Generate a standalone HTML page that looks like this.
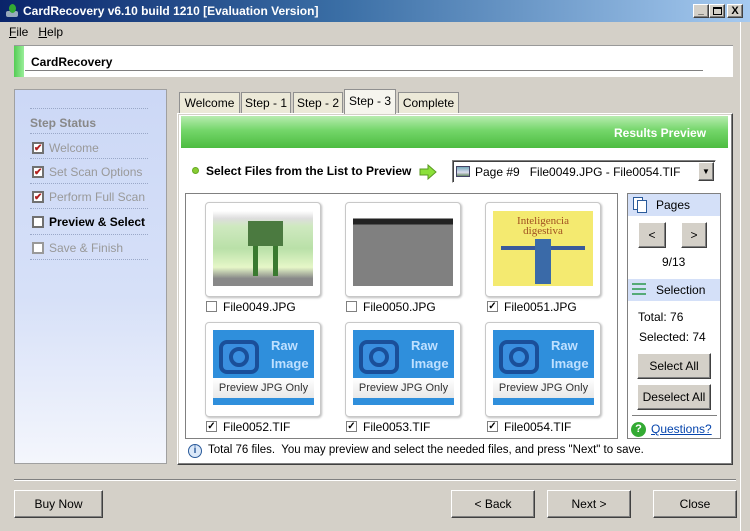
<!DOCTYPE html>
<html><head><style>
*{box-sizing:border-box;margin:0;padding:0}
body{width:750px;height:531px;background:#d4d0c8;font-family:"Liberation Sans",sans-serif;font-size:12px;color:#000;position:relative;overflow:hidden}
.a{position:absolute}
.btn{position:absolute;background:#d4d0c8;border:1px solid;border-color:#fff #404040 #404040 #fff;box-shadow:inset -1px -1px 0 #808080;text-align:center;font-size:12px}
.card{position:absolute;width:116px;height:95px;background:#fff;border:1px solid #c8c8c8;border-radius:4px;box-shadow:1px 1px 2px #bbb}
.cb{position:absolute;width:11px;height:11px;border:1px solid #808080;background:#fff;font-size:10px;line-height:9px;text-align:center;font-weight:bold}
.lbl{position:absolute;font-size:12px}
.raw{position:absolute;left:7px;top:7px;width:101px;height:75px;background:#2f8fdc;overflow:hidden}
.raw .cam{position:absolute;left:6px;top:10px;width:40px;height:34px;border:4px solid #1a4f9a;border-radius:8px;background:#3a8fe0}
.raw .cam i{position:absolute;left:6px;top:3px;width:20px;height:20px;border:4px solid #1a4f9a;border-radius:50%}
.raw b{position:absolute;left:58px;color:#bfe0ff;font-size:13px;font-weight:bold}
.raw .w{position:absolute;left:0;top:48px;width:101px;height:20px;background:linear-gradient(#fff,#e8e8e8);font-size:11px;text-align:center;line-height:20px;color:#333}
.step{position:absolute;left:32px;font-size:12px;color:#999}
.step .cb{left:0;top:1px;color:#b02020;border-color:#707070;border-width:2px;width:12px;height:12px}
.dot{position:absolute;left:30px;width:118px;border-top:1px dotted #9aa8c8}
.tab{position:absolute;top:92px;height:21px;background:#ece9d8;border:1px solid #909090;border-bottom:none;font-size:12px;text-align:center;line-height:20px}
</style></head><body>
<div class="a" style="left:0;top:0;width:750px;height:22px;background:linear-gradient(90deg,#0a246a 0%,#3a6ea5 45%,#a6caf0 100%)"></div>
<div class="a" style="left:4px;top:3px;width:16px;height:16px;"><div class="a" style="left:2px;top:8px;width:12px;height:6px;background:#9ab;border-radius:2px"></div><div class="a" style="left:5px;top:1px;width:7px;height:9px;background:#3a3;border-radius:50%"></div></div>
<div class="a" style="left:23px;top:4px;color:#fff;font-weight:bold;font-size:12px">CardRecovery v6.10 build 1210 [Evaluation Version]</div>
<div class="btn" style="left:693px;top:4px;width:16px;height:14px;font-size:10px;line-height:12px;font-weight:bold">_</div>
<div class="btn" style="left:709px;top:4px;width:16px;height:14px"><div class="a" style="left:3px;top:2px;width:9px;height:8px;border:1px solid #000;border-top-width:2px"></div></div>
<div class="btn" style="left:727px;top:4px;width:16px;height:14px;font-size:11px;line-height:12px;font-weight:bold">X</div>
<div class="a" style="left:740px;top:22px;width:10px;height:509px;border-left:1px solid #fff"></div>
<div class="a" style="left:9px;top:25px;font-size:12px"><u>F</u>ile &nbsp;&nbsp;<u>H</u>elp</div>
<div class="a" style="left:14px;top:45px;width:719px;height:32px;background:#fff;border-top:1px solid #999"></div>
<div class="a" style="left:14px;top:46px;width:10px;height:31px;background:linear-gradient(90deg,#5c5,#9e9)"></div>
<div class="a" style="left:31px;top:55px;font-weight:bold;font-size:12px">CardRecovery</div>
<div class="a" style="left:25px;top:70px;width:678px;border-top:1px solid #808080"></div>
<div class="a" style="left:14px;top:89px;width:153px;height:375px;border:1px solid #a0a0a0;background:linear-gradient(#ccd8f6 0%,#d6e0f8 55%,#f4f6fc 100%)"></div>
<div class="dot" style="top:108px"></div>
<div class="a" style="left:30px;top:116px;font-weight:bold;color:#888;font-size:12px">Step Status</div>
<div class="dot" style="top:133px"></div>
<div class="step" style="top:141px"><div class="cb">✔</div><span style="margin-left:17px">Welcome</span></div>
<div class="dot" style="top:158px"></div>
<div class="step" style="top:165px"><div class="cb">✔</div><span style="margin-left:17px">Set Scan Options</span></div>
<div class="dot" style="top:183px"></div>
<div class="step" style="top:190px"><div class="cb">✔</div><span style="margin-left:17px">Perform Full Scan</span></div>
<div class="dot" style="top:208px"></div>
<div class="step" style="top:215px;color:#000;font-weight:bold"><div class="cb"></div><span style="margin-left:17px">Preview &amp; Select</span></div>
<div class="dot" style="top:234px"></div>
<div class="step" style="top:241px"><div class="cb" style="border-color:#999"></div><span style="margin-left:17px">Save &amp; Finish</span></div>
<div class="dot" style="top:259px"></div>
<div class="tab" style="left:179px;width:61px">Welcome</div>
<div class="tab" style="left:241px;width:50px">Step - 1</div>
<div class="tab" style="left:293px;width:50px">Step - 2</div>
<div class="tab" style="left:344px;width:52px;top:89px;height:25px;background:#f6f5ee;line-height:22px;z-index:2">Step - 3</div>
<div class="tab" style="left:398px;width:61px">Complete</div>
<div class="a" style="left:177px;top:113px;width:556px;height:352px;background:#fff;border:1px solid;border-color:#fff #404040 #404040 #fff;box-shadow:inset -1px -1px 0 #808080,inset 1px 1px 0 #d4d0c8"></div>
<div class="a" style="left:181px;top:116px;width:547px;height:32px;background:linear-gradient(#b8ecb0,#74d66a 45%,#4cbc40)"></div>
<div class="a" style="left:614px;top:126px;color:#fff;font-weight:bold;font-size:12px">Results Preview</div>
<div class="a" style="left:192px;top:167px;width:7px;height:7px;border-radius:50%;background:#8c3;border:1px solid #6a2"></div>
<div class="a" style="left:206px;top:164px;font-weight:bold;font-size:12px">Select Files from the List to Preview</div>
<svg class="a" style="left:419px;top:164px" width="18" height="16"><path d="M1 5h8V1l8 7-8 7v-4H1z" fill="#8be03a" stroke="#5a9a20"/></svg>
<div class="a" style="left:452px;top:160px;width:264px;height:23px;border:1px solid;border-color:#808080 #fff #fff #808080;background:#fff;box-shadow:inset 1px 1px 0 #404040"></div>
<div class="a" style="left:456px;top:166px;width:14px;height:11px;border:1px solid #446;background:linear-gradient(#7ab,#dde 60%,#686)"></div>
<div class="a" style="left:475px;top:165px;font-size:12px">Page #9 &nbsp;&nbsp;File0049.JPG - File0054.TIF</div>
<div class="btn" style="left:698px;top:162px;width:16px;height:19px;font-size:8px;line-height:17px">▼</div>
<div class="a" style="left:185px;top:193px;width:433px;height:246px;border:1px solid #808080;background:#fff"></div>
<div class="card" style="left:205px;top:202px"><div class="a" style="left:7px;top:8px;width:100px;height:75px;background:linear-gradient(#fff 0%,#ddd 10%,#cfe9c0 20%,#b9e0a8 50%,#e6f7c8 75%,#888 90%)"><div class="a" style="left:35px;top:10px;width:35px;height:25px;background:#4b7a40"></div><div class="a" style="left:40px;top:35px;width:5px;height:30px;background:#3a7a30"></div><div class="a" style="left:60px;top:35px;width:5px;height:30px;background:#3a7a30"></div></div></div>
<div class="card" style="left:345px;top:202px"><div class="a" style="left:7px;top:8px;width:100px;height:75px;background:linear-gradient(#fff 0 10%,#222 10% 18%,#808080 18%)"></div></div>
<div class="card" style="left:485px;top:202px"><div class="a" style="left:7px;top:8px;width:100px;height:75px;background:#f4ea70"><div class="a" style="left:10px;top:5px;width:80px;height:20px;color:#a05020;font-family:'Liberation Serif',serif;font-size:11px;text-align:center;line-height:10px">Inteligencia digestiva</div><div class="a" style="left:8px;top:35px;width:84px;height:4px;background:#3a5a9a"></div><div class="a" style="left:42px;top:28px;width:16px;height:45px;background:#3a6aa8"></div></div></div>
<div class="cb" style="left:206px;top:301px"></div><div class="lbl" style="left:223px;top:300px">File0049.JPG</div>
<div class="cb" style="left:346px;top:301px"></div><div class="lbl" style="left:363px;top:300px">File0050.JPG</div>
<div class="cb" style="left:487px;top:301px">✓</div><div class="lbl" style="left:504px;top:300px">File0051.JPG</div>
<div class="card" style="left:205px;top:322px"><div class="raw"><div class="cam"><i></i></div><b style="top:8px">Raw</b><b style="top:26px">Image</b><div class="w">Preview JPG Only</div></div></div>
<div class="card" style="left:345px;top:322px"><div class="raw"><div class="cam"><i></i></div><b style="top:8px">Raw</b><b style="top:26px">Image</b><div class="w">Preview JPG Only</div></div></div>
<div class="card" style="left:485px;top:322px"><div class="raw"><div class="cam"><i></i></div><b style="top:8px">Raw</b><b style="top:26px">Image</b><div class="w">Preview JPG Only</div></div></div>
<div class="cb" style="left:206px;top:421px">✓</div><div class="lbl" style="left:223px;top:420px">File0052.TIF</div>
<div class="cb" style="left:346px;top:421px">✓</div><div class="lbl" style="left:363px;top:420px">File0053.TIF</div>
<div class="cb" style="left:487px;top:421px">✓</div><div class="lbl" style="left:504px;top:420px">File0054.TIF</div>
<div class="a" style="left:627px;top:193px;width:94px;height:246px;border:1px solid #808080;background:#fff"></div>
<div class="a" style="left:628px;top:194px;width:92px;height:22px;background:#d4e0f8"></div>
<div class="a" style="left:633px;top:197px;width:10px;height:13px;border:1px solid #2a5a9a;background:#fff"></div><div class="a" style="left:637px;top:200px;width:10px;height:13px;border:1px solid #2a5a9a;background:#fff"></div>
<div class="a" style="left:656px;top:198px;font-size:12px">Pages</div>
<div class="btn" style="left:638px;top:222px;width:28px;height:26px;line-height:24px">&lt;</div>
<div class="btn" style="left:681px;top:222px;width:26px;height:26px;line-height:24px">&gt;</div>
<div class="a" style="left:662px;top:255px;font-size:12px">9/13</div>
<div class="a" style="left:628px;top:279px;width:92px;height:22px;background:#d4e0f8"></div>
<div class="a" style="left:632px;top:283px;width:14px;height:14px;background:repeating-linear-gradient(#5a7 0 2px,transparent 2px 5px)"></div>
<div class="a" style="left:656px;top:283px;font-size:12px">Selection</div>
<div class="a" style="left:638px;top:310px;font-size:12px">Total: 76</div>
<div class="a" style="left:639px;top:330px;font-size:12px">Selected: 74</div>
<div class="btn" style="left:637px;top:353px;width:74px;height:26px;line-height:24px">Select All</div>
<div class="btn" style="left:637px;top:384px;width:74px;height:26px;line-height:24px">Deselect All</div>
<div class="a" style="left:632px;top:415px;width:85px;border-top:1px solid #808080"></div>
<div class="a" style="left:631px;top:422px;width:15px;height:15px;border-radius:50%;background:#3a3;color:#fff;font-weight:bold;font-size:11px;text-align:center;line-height:15px">?</div>
<div class="a" style="left:651px;top:422px;font-size:12px;color:#0645ad;text-decoration:underline">Questions?</div>
<div class="a" style="left:188px;top:444px;width:14px;height:14px;border-radius:50%;background:#dbe8f8;border:1px solid #2a5a9a;color:#2a5a9a;font-weight:bold;font-size:10px;text-align:center;line-height:12px">i</div>
<div class="a" style="left:208px;top:444px;font-size:11.5px">Total 76 files.&nbsp; You may preview and select the needed files, and press "Next" to save.</div>
<div class="a" style="left:14px;top:479px;width:722px;border-top:1px solid #808080;border-bottom:1px solid #fff"></div>
<div class="btn" style="left:14px;top:490px;width:89px;height:28px;line-height:26px">Buy Now</div>
<div class="btn" style="left:451px;top:490px;width:84px;height:28px;line-height:26px">&lt; Back</div>
<div class="btn" style="left:547px;top:490px;width:84px;height:28px;line-height:26px">Next &gt;</div>
<div class="btn" style="left:653px;top:490px;width:84px;height:28px;line-height:26px">Close</div>
</body></html>
